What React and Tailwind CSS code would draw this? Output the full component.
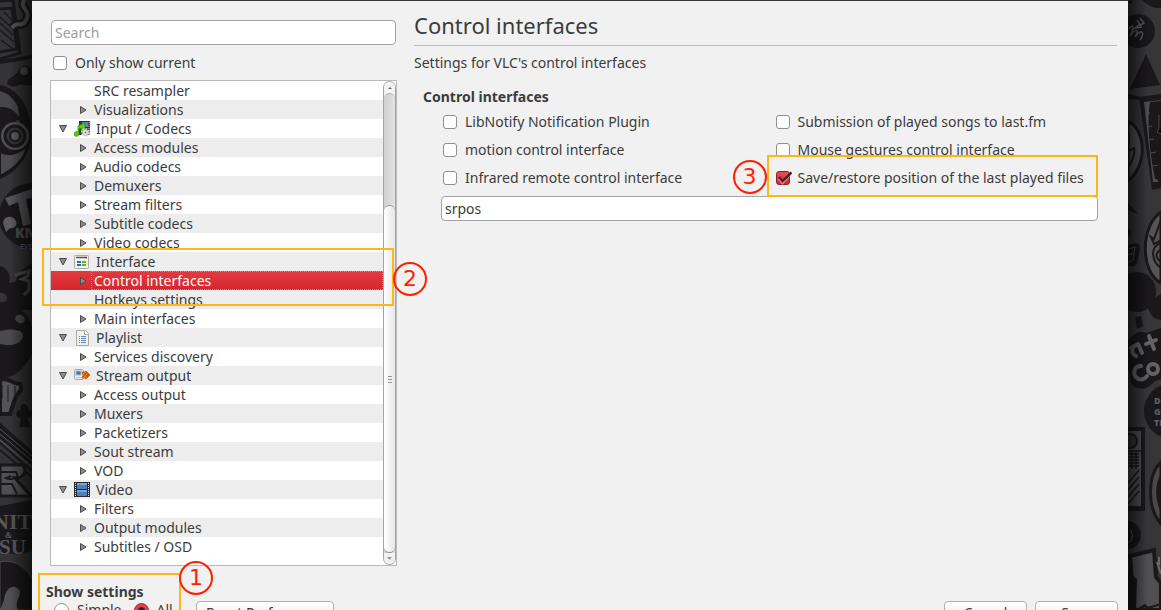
import { useState } from 'react';
import clsx from 'clsx';

const treeRows = [
  { label: 'SRC resampler', leaf: true },
  { label: 'Visualizations' },
  { label: 'Input / Codecs', icon: 'codecs' },
  { label: 'Access modules' },
  { label: 'Audio codecs' },
  { label: 'Demuxers' },
  { label: 'Stream filters' },
  { label: 'Subtitle codecs' },
  { label: 'Video codecs' },
  { label: 'Interface', icon: 'interface' },
  { label: 'Control interfaces' },
  { label: 'Hotkeys settings', leaf: true },
  { label: 'Main interfaces' },
  { label: 'Playlist', icon: 'playlist' },
  { label: 'Services discovery' },
  { label: 'Stream output', icon: 'stream' },
  { label: 'Access output' },
  { label: 'Muxers' },
  { label: 'Packetizers' },
  { label: 'Sout stream' },
  { label: 'VOD' },
  { label: 'Video', icon: 'video' },
  { label: 'Filters' },
  { label: 'Output modules' },
  { label: 'Subtitles / OSD' },
];

const plugins = [
  { id: 'notify', label: 'LibNotify Notification Plugin' },
  { id: 'lastfm', label: 'Submission of played songs to last.fm' },
  { id: 'motion', label: 'motion control interface' },
  { id: 'gestures', label: 'Mouse gestures control interface' },
  { id: 'infrared', label: 'Infrared remote control interface' },
  { id: 'srpos', label: 'Save/restore position of the last played files', checked: true },
];

const icons = {
  codecs: (
    <>
      <rect x="5" y="0" width="11" height="14" fill="#2f3438" />
      <rect x="8" y="1" width="6" height="5" fill="#5b86c4" />
      <path d="M15 1v13" stroke="#ddd" strokeDasharray="1 1" />
      <path d="M4 5 11 1.500v7c0 3-4 4-4 1V7L5 8v5c0 3-5 3-5 0 0-2 2-3 4-2z" fill="#62c81c" stroke="#347e0a" strokeWidth=".7" />
      <circle cx="11.5" cy="11.5" r="3.500" fill="none" stroke="#e4e4e4" strokeWidth="2" strokeDasharray="1.600 1.100" />
      <circle cx="11.5" cy="11.5" r="3" fill="#e8e8e8" stroke="#999" strokeWidth=".6" />
      <circle cx="11.5" cy="11.5" r="1" fill="#777" />
    </>
  ),
  interface: (
    <>
      <rect x="0.5" y="1.5" width="14" height="13" rx="1" fill="#f2f2ef" stroke="#aaaca6" />
      <path d="M2 3.5h9" stroke="#555" strokeWidth="1.5" />
      <path d="M11 3.5h2" stroke="#c00" strokeWidth="1.5" />
      <path d="M3 8h4M3 11h4" stroke="#3468b0" strokeWidth="2" />
      <path d="M8 8h4M8 11h4" stroke="#60b91c" strokeWidth="2" />
    </>
  ),
  playlist: (
    <>
      <path d="M2.5.5h9l3 3v12h-12z" fill="#efefeb" stroke="#a9aca3" />
      <path d="M10.5.5v4h4" fill="#fff" stroke="#a9aca3" />
      <path d="M5 6.5h1M5 8.5h1M5 10.5h1M5 12.5h1M7 6.5h5M7 8.5h5M7 10.5h5M7 12.5h5" stroke="#5d88b9" />
    </>
  ),
  stream: (
    <>
      <rect x="0.5" y="1.5" width="9" height="10" rx="1" fill="#f0f0ed" stroke="#aaa" />
      <rect x="2" y="3" width="5" height="4" fill="#3c78bb" stroke="#9bb9d8" />
      <path d="M2 9.5h5" stroke="#bbb" />
      <path d="M8 4h3l1-1 4 4-4 4-1-1H8l1-3z" fill="#f2860a" stroke="#c24b00" strokeWidth=".7" />
      <path d="m9 4 5 5M12 4l3 4M9 9l4-5M11 10l4-4" stroke="#bd3b00" strokeWidth=".7" />
    </>
  ),
  video: (
    <>
      <rect width="16" height="15" fill="#272b30" />
      <rect x="3" y="1" width="10" height="6" fill="#4a80bd" />
      <rect x="3" y="8" width="10" height="6" fill="#4a80bd" />
      <path d="M3 1h10v2H3zM3 8h10v2H3z" fill="#78a4d4" />
      <path d="M1.5 1v14M14.5 1v14" stroke="#eee" strokeDasharray="1 1" />
    </>
  ),
};

const Expander = ({ open }) => (
  <svg className="w-2 h-2 flex-shrink-0" viewBox="0 0 8 8" fill="#8c8c8c" stroke="#4b4b4b" strokeLinejoin="round" aria-hidden="true">
    <path d={open ? 'M.5.5h7L4 7z' : 'M1.5.5v7L7 4z'} />
  </svg>
);

const TreeRow = ({ row, selected, onSelect }) => (
  <li role="treeitem" aria-selected={selected} className="h-[19px] odd:bg-white even:bg-[#ededed]">
    <button
      type="button"
      onClick={onSelect}
      className={clsx(
        'flex items-center w-full h-full text-left whitespace-nowrap',
        row.icon ? 'pl-2' : 'pl-7',
        selected && 'bg-linear-to-b from-[#e5383f] to-[#d5262f] text-white'
      )}
    >
      {row.leaf ? <span className="w-2" /> : <Expander open={Boolean(row.icon)} />}
      {row.icon && (
        <svg className="w-4 h-4 ml-[7px] flex-shrink-0" viewBox="0 0 16 16" aria-hidden="true">
          {icons[row.icon]}
        </svg>
      )}
      <span
        className={clsx(
          'flex items-center h-full flex-1 border border-dotted',
          row.icon ? 'pl-[5px]' : 'ml-1 pl-[2px]',
          selected ? 'border-[#b98d80]' : 'border-transparent'
        )}
      >
        {row.label}
      </span>
    </button>
  </li>
);

const ScrollBar = () => (
  <div className="flex flex-col w-[13px] flex-shrink-0 rounded-full border-x border-[#a5a5a5] bg-linear-to-r from-[#cfcfcf] to-[#e4e4e4]" aria-hidden="true">
    <div className="h-5 -mb-2 flex justify-center rounded-t-full border-t border-[#b5b5b5] bg-[#f4f4f4]">
      <svg className="w-1 h-1 mt-1" viewBox="0 0 4 4"><path d="M0 3h4L2 1z" fill="#666" /></svg>
    </div>
    <div className="h-28 rounded-t-full border-t border-[#b0b0b0] bg-linear-to-r from-[#d0d0d0] to-[#e2e2e2]" />
    <div className="flex-1 flex flex-col items-center justify-center gap-[2px] rounded-full border-y border-[#8f8f8f] bg-linear-to-r from-white to-[#e6e6e6]">
      <span className="w-1 h-px bg-[#999]" />
      <span className="w-1 h-px bg-[#999]" />
      <span className="w-1 h-px bg-[#999]" />
    </div>
    <div className="h-3 flex items-center justify-center rounded-b-full border-b border-[#b5b5b5] bg-[#f0f0f0]">
      <svg className="w-[5px] h-1" viewBox="0 0 5 4"><path d="M0 0h5L2.5 3z" fill="#999" /></svg>
    </div>
  </div>
);

const CheckBox = ({ label, defaultChecked }) => (
  <label className="flex items-center gap-2 h-7 whitespace-nowrap">
    <span className="relative w-[14px] h-[14px] flex-shrink-0">
      <input
        type="checkbox"
        defaultChecked={defaultChecked}
        className="peer block appearance-none w-[14px] h-[14px] rounded-[3px] border border-[#8f8f8f] bg-white checked:border-[#8d2028] checked:bg-linear-to-b checked:from-[#ee4a52] checked:to-[#cb2832]"
      />
      <svg className="absolute left-0 top-0 w-4 h-[14px] hidden peer-checked:block" viewBox="0 0 16 14" fill="none" aria-hidden="true">
        <path d="m3 7 3.5 4L13 3.500" stroke="#f27a80" strokeWidth="4" />
        <path d="m3 6 3.5 4L15.500 1.500" stroke="#40262a" strokeWidth="2.500" />
      </svg>
    </span>
    {label}
  </label>
);

const RadioButton = ({ label, defaultChecked }) => (
  <label className="flex items-center gap-2">
    <input
      type="radio"
      name="show"
      defaultChecked={defaultChecked}
      className="appearance-none w-[15px] h-[15px] rounded-full border border-[#8f8f8f] bg-white checked:border-[#a5262e] checked:bg-[radial-gradient(circle,#3b2226_0_3px,#e2414a_4px)]"
    />
    {label}
  </label>
);

// Red numbered marker used to call out a step
const Marker = ({ number, className }) => (
  <span
    className={clsx(
      'absolute z-20 flex items-center justify-center w-[34px] h-[34px] rounded-full border-2 border-[#ff1f00] text-[#ff1f00] text-[22px] leading-none font-normal font-["DejaVu_Sans",sans-serif]',
      className
    )}
  >
    {number}
  </span>
);

const Outline = ({ className }) => (
  <span className={clsx('absolute z-10 border-2 border-[#ffb617] pointer-events-none', className)} />
);

const DialogButton = ({ children, className }) => (
  <button type="button" className={clsx('h-6 rounded-[4px] border border-[#b0b0b0] bg-linear-to-b from-white to-[#e9e9e9]', className)}>
    {children}
  </button>
);

const WallpaperLeft = () => (
  <svg className="w-8 h-full flex-shrink-0 bg-[#343436]" viewBox="0 0 32 610" preserveAspectRatio="xMinYMin slice" aria-hidden="true">
    <defs>
      <linearGradient id="shadeLeft">
        <stop offset="0.300" stopColor="#000" stopOpacity="0" />
        <stop offset="1" stopColor="#000" stopOpacity="0.600" />
      </linearGradient>
    </defs>
    <g fill="none" stroke="#1a181a" strokeWidth="3">
      <path d="M0 1 13 0 20 53 0 59M0 9l12-1 5 41-17 3" />
      <path d="m0 17 13 12M0 23l13 12M0 30l14 12M1 40l12 9M4 12l8 8" strokeWidth="1.500" />
      <path d="M25 0c-8 7 9 11 0 22-4 6-7-2-13 6" strokeWidth="9" />
      <path d="M25 0c-8 7 9 11 0 22-4 6-7-2-13 6" stroke="#555557" strokeWidth="4" />
      <path d="M0 62 32 57" strokeWidth="4" />
    </g>
    <path d="M7 83c0-6 9-6 11-12 4-8 14-6 14 1v13c-6 2-9-2-13 0-4 3-12 1-12-2z" fill="#1a181a" />
    <circle cx="24" cy="71" r="4" fill="#49494b" />
    <path d="M0 85c19 3 33 26 31 52-2 20-14 35-31 42z" fill="#1a181a" />
    <path d="M0 91c8 2 14 8 18 16l2 18c-6-8-13-10-20-8z" fill="#47474a" />
    <path d="M0 107c10-1 18 5 21 15-9-5-15-2-21 3z" fill="#1a181a" />
    <circle cx="15" cy="136" r="14" fill="#505053" />
    <circle cx="15" cy="136" r="10" fill="#343436" stroke="#1a181a" strokeWidth="3" />
    <circle cx="15" cy="136" r="5" fill="#5c5c5f" stroke="#1a181a" strokeWidth="2" />
    <path d="M0 152c10 5 18 1 27-5-3 13-13 22-27 29z" fill="#4c4c4e" stroke="#1a181a" strokeWidth="2" />
    <circle cx="32" cy="216" r="33" fill="#1a181a" />
    <path d="m5 198 27-9v9l-6 1 5 25-8 2-5-24-9 4z" fill="#555558" />
    <path d="M4 226c-4-9 8-13 12-5 2 5-3 8-6 7l-4 4z" fill="#5b5b5e" />
    <text x="15" y="238" fill="#505053" fontFamily="Open Sans, sans-serif" fontSize="14" fontWeight="800">KN</text>
    <text x="20" y="249" fill="#505053" fontFamily="Open Sans, sans-serif" fontSize="7" fontWeight="700">EVE</text>
    <path d="M0 266c8 2 12 11 9 17l6-1c5-11 9-15 17-18v46H0v-8c7 1 9-4 5-8l-5-2z" fill="#1a181a" />
    <path d="m15 275 14-4-1 5-6 3 7 2v9l-5 5" fill="none" stroke="#4c4c4e" strokeWidth="3" />
    <path d="M0 307c20-4 32 8 32 25v22c-9 17-20 25-32 24z" fill="#1a181a" />
    <ellipse cx="20" cy="319" rx="5" ry="4" fill="#4a4a4c" transform="rotate(25 20 319)" />
    <path d="M0 331c10-3 24-2 23 5-1 8-12 11-23 8z" fill="#4a4a4c" />
    <path d="M0 380c8-4 13 5 20 4 4 6-3 9-5 15l-5 15H0z" fill="#545456" stroke="#1a181a" strokeWidth="4" />
    <path d="M2 385v14m6-14v17m7-16v12" stroke="#1a181a" />
    <path d="M21 410c-7-1-6 9 0 8l-2 9h12l-4-9c7 0 7-9 1-8 1-8-10-8-7 0z" fill="#1a181a" />
    <path d="m0 424 32 28v10L0 434zM0 437l32 27M0 443l32 28M0 450l32 27" fill="#1a181a" stroke="#1a181a" strokeWidth="2" />
    <path d="m0 429 32 27M0 434l32 27M0 440l32 27" stroke="#58585a" />
    <path d="M0 465h23c5 7-1 14-8 13l16 18H0z" fill="#505052" stroke="#1a181a" strokeWidth="3" />
    <path d="M0 472h16c5 7-6 8-10 6l5-2M0 484h12l5 10" fill="none" stroke="#1a181a" strokeWidth="2" />
    <path d="M0 506 32 500v51l-12 3-20-1z" fill="#1a181a" />
    <g fill="#58585b" fontFamily="Liberation Serif, serif" fontWeight="700">
      <text x="-7" y="529" fontSize="22">NIT</text>
      <text x="5" y="538" fontSize="9">&amp;</text>
      <text x="-1" y="554" fontSize="21">SU</text>
    </g>
    <path d="M0 562c17-4 28 9 32 17v31H0z" fill="#1a181a" stroke="#49494b" />
    <path d="M4 600c1-12 10-18 16-9 0 8-6 11-2 19H0z" fill="#505052" />
    <rect width="32" height="610" fill="url(#shadeLeft)" />
  </svg>
);

const WallpaperRight = () => (
  <svg className="w-[33px] h-full flex-shrink-0 bg-[#363638]" viewBox="0 0 33 610" preserveAspectRatio="xMinYMin slice" aria-hidden="true">
    <defs>
      <linearGradient id="shadeRight">
        <stop offset="0" stopColor="#000" stopOpacity="0.600" />
        <stop offset="0.600" stopColor="#000" stopOpacity="0" />
      </linearGradient>
    </defs>
    <path d="M14 0c5 5 12 9 19 8V0zM0 2l5-2-1 4z" fill="#1a181a" />
    <circle cx="10" cy="31" r="17" fill="#1a181a" />
    <path d="M1 29c5-7 5 0 1 7 7-9 9-6 5 1 7-10 10-4 5 3M9 20l3 4-5 4 7-1M12 18l4 5-5 3" fill="none" stroke="#5a5a5d" strokeWidth="1.500" />
    <path d="m18 54 15 33v-2L2 89zM0 94l12 3v3L0 99z" fill="#1a181a" />
    <path d="m11 97 22-3v94l-9 2z" fill="#1a181a" />
    <path d="m16 102 17-2v9l-10 2 7 71h-5z" fill="#4c4c4e" />
    <path d="m22 102 11-1v79l-6-1c-4-20-9-54-5-77z" fill="#1a181a" />
    <path d="m17 114 5-1m-3 14 5-1m-3 14 5-1m-3 14 5-1m-3 14 5-1M31 115v14l-2 3 4 2" stroke="#4c4c4e" />
    <path d="M0 121c19 10 19 45 0 60z" fill="#4e4e51" stroke="#1a181a" strokeWidth="3" />
    <path d="M0 132c3 12-2 17-1 20l7-4c2 6-3 15-7 22" fill="none" stroke="#1a181a" strokeWidth="2" />
    <path d="m0 203 10 11-10-4zM0 228c4 0 4 9 0 9zM0 245c12-5 14-1 10 13-1 10-5 8-10 8z" fill="#1a181a" />
    <path d="m1 249 6-2-2 13-5 3m0-8 6-2" stroke="#4b4b4d" fill="none" />
    <path d="M33 212c-21 14-21 60 0 71z" fill="#555558" stroke="#1a181a" strokeWidth="3" />
    <path d="m33 220-7 19-3-2 3 7 7-4M33 243c-12 4-9 19 0 25M33 249c-6 5-6 8 0 13" fill="none" stroke="#1a181a" strokeWidth="2" />
    <ellipse cx="9" cy="292" rx="19" ry="20" fill="#1a181a" />
    <path d="m18 304 15-10v26c-10-1-11-8-15-16zM7 317l6-1 2 10-6 3z" fill="#1a181a" />
    <path d="M0 339c7-5 10-9 18-6l15-5v52c-8-2-11 12-21 8-11 1-9-13-12-18z" fill="#1a181a" />
    <g fill="none" stroke="#626265" strokeWidth="4" strokeLinecap="round">
      <path d="m3 348 7-4M10 344l4 9M5 347c-2 4 0 8 3 9M21 336l5 13m-8-5 10-4" />
      <path d="M13 366c-7 0-9 8-4 12 3 3 8 1 10-2" />
      <circle cx="25" cy="369" r="5" />
    </g>
    <circle cx="44" cy="411" r="28" fill="#1a181a" />
    <g fill="#5b5b5e" fontFamily="Open Sans, sans-serif" fontSize="9" fontWeight="800">
      <text x="26" y="404">DO</text>
      <text x="26" y="415">GO</text>
      <text x="26" y="426">TH</text>
    </g>
    <path d="M0 427h17v84H0" fill="#1a181a" />
    <path d="M0 431h13v75H0z" fill="#4c4c4e" />
    <circle cx="2" cy="441" r="7" fill="#363638" stroke="#1a181a" strokeWidth="2" />
    <path d="M0 451h13M0 454h11M0 457h11M0 460h11M0 463h11M0 466h11M4 451v18M8 451v18M0 483l11-13M0 490l11-13M0 497l11-13M0 504l11-13" stroke="#1a181a" strokeWidth="1.500" />
    <path d="M33 462c-14 13-14 46 0 62z" fill="#49494b" stroke="#1a181a" strokeWidth="3" />
    <path d="M33 473c-7 14-6 25 0 40z" fill="#1a181a" />
    <circle cx="-1" cy="535" r="14" fill="#1a181a" />
    <path d="M0 543c5-3 5-7 3-13" fill="none" stroke="#59595c" />
    <path d="m2 556 24-6 2 27 5 6v27H6z" fill="#505053" stroke="#1a181a" strokeWidth="4" />
    <path d="m0 572 8 8-1 30H0zM10 609l7-4 3 3 13-4" fill="#1a181a" stroke="#1a181a" strokeWidth="2" />
    <path d="m29 562 4 12M31 557v8" stroke="#69696b" strokeWidth="2" />
    <rect width="33" height="610" fill="url(#shadeRight)" />
  </svg>
);

const App = () => {
  const [selected, setSelected] = useState('Control interfaces');

  return (
    <div className="flex h-screen overflow-hidden bg-[#343436] text-[14px] leading-[18px] text-[#3c3c3c] font-['Noto_Sans',sans-serif]">
      <WallpaperLeft />

      <main className="flex-1 min-w-0 border-t border-[#3b383b] bg-[#f1f1f1]">
        <div className="flex gap-[17px] pl-[18px] pr-[11px]">
          {/* Module tree */}
          <section className="w-[347px] flex-shrink-0 pt-[19px]">
            <div className="px-px">
              <input
                type="search"
                aria-label="Search"
                placeholder="Search"
                className="block w-full h-[25px] px-[3px] rounded-[4px] border border-[#a2a2a2] bg-white placeholder:text-[#9c9c9c]"
              />
            </div>
            <div className="pt-1 pb-[3px] pl-[3px]">
              <CheckBox label="Only show current" />
            </div>

            <div className="relative">
              <div className="flex border border-[#b9b9b9] bg-white">
                <ul role="tree" aria-label="Modules" className="flex-1 pb-[9px]">
                  {treeRows.map((row) => (
                    <TreeRow
                      key={row.label}
                      row={row}
                      selected={row.label === selected}
                      onSelect={() => setSelected(row.label)}
                    />
                  ))}
                </ul>
                <ScrollBar />
              </div>
              <Outline className="-left-2 right-[3px] top-[168px] h-[58px]" />
              <Marker number={2} className="-right-[30px] top-[182px]" />
            </div>
          </section>

          {/* Settings of the selected module */}
          <section className="flex-1 min-w-0 pt-3">
            <h1 className="h-[33px] text-[22px] leading-6 border-b border-[#bdbdbd]">{selected}</h1>
            <p className="mt-2">Settings for VLC's control interfaces</p>

            <h2 className="mt-4 ml-[9px] font-bold">Control interfaces</h2>
            <div className="ml-[27px] mr-[19px] mt-[2px]">
              <div className="grid grid-cols-2 gap-x-[10px] pl-[2px]">
                {plugins.map((plugin) => (
                  <div key={plugin.id} className="relative">
                    <CheckBox label={plugin.label} defaultChecked={plugin.checked} />
                    {plugin.checked && (
                      <>
                        <Outline className="-left-[9px] right-0 -top-[9px] h-[42px]" />
                        <Marker number={3} className="-left-[43px] -top-1" />
                      </>
                    )}
                  </div>
                ))}
              </div>
              <input
                type="text"
                aria-label="Control interface modules"
                defaultValue="srpos"
                className="mt-1 block w-full h-[25px] px-[3px] rounded-[4px] border border-[#a2a2a2] bg-white"
              />
            </div>
          </section>
        </div>

        {/* Footer */}
        <footer className="flex items-start gap-2 mt-[7px] pl-[6px] pr-[10px]">
          <div className="relative w-[143px] h-[60px] mr-[7px] pt-[10px] pl-2">
            <Outline className="inset-0" />
            <Marker number={1} className="-right-8 -top-3" />
            <p className="font-bold" id="show-settings">Show settings</p>
            <div role="radiogroup" aria-labelledby="show-settings" className="flex gap-3 pl-2">
              <RadioButton label="Simple" />
              <RadioButton label="All" defaultChecked />
            </div>
          </div>
          <DialogButton className="mt-7 w-[138px]">Reset Preferences</DialogButton>
          <DialogButton className="mt-7 w-[83px] ml-auto">Cancel</DialogButton>
          <DialogButton className="mt-7 w-[83px]">Save</DialogButton>
        </footer>
      </main>

      <WallpaperRight />
    </div>
  );
};

export default App;
